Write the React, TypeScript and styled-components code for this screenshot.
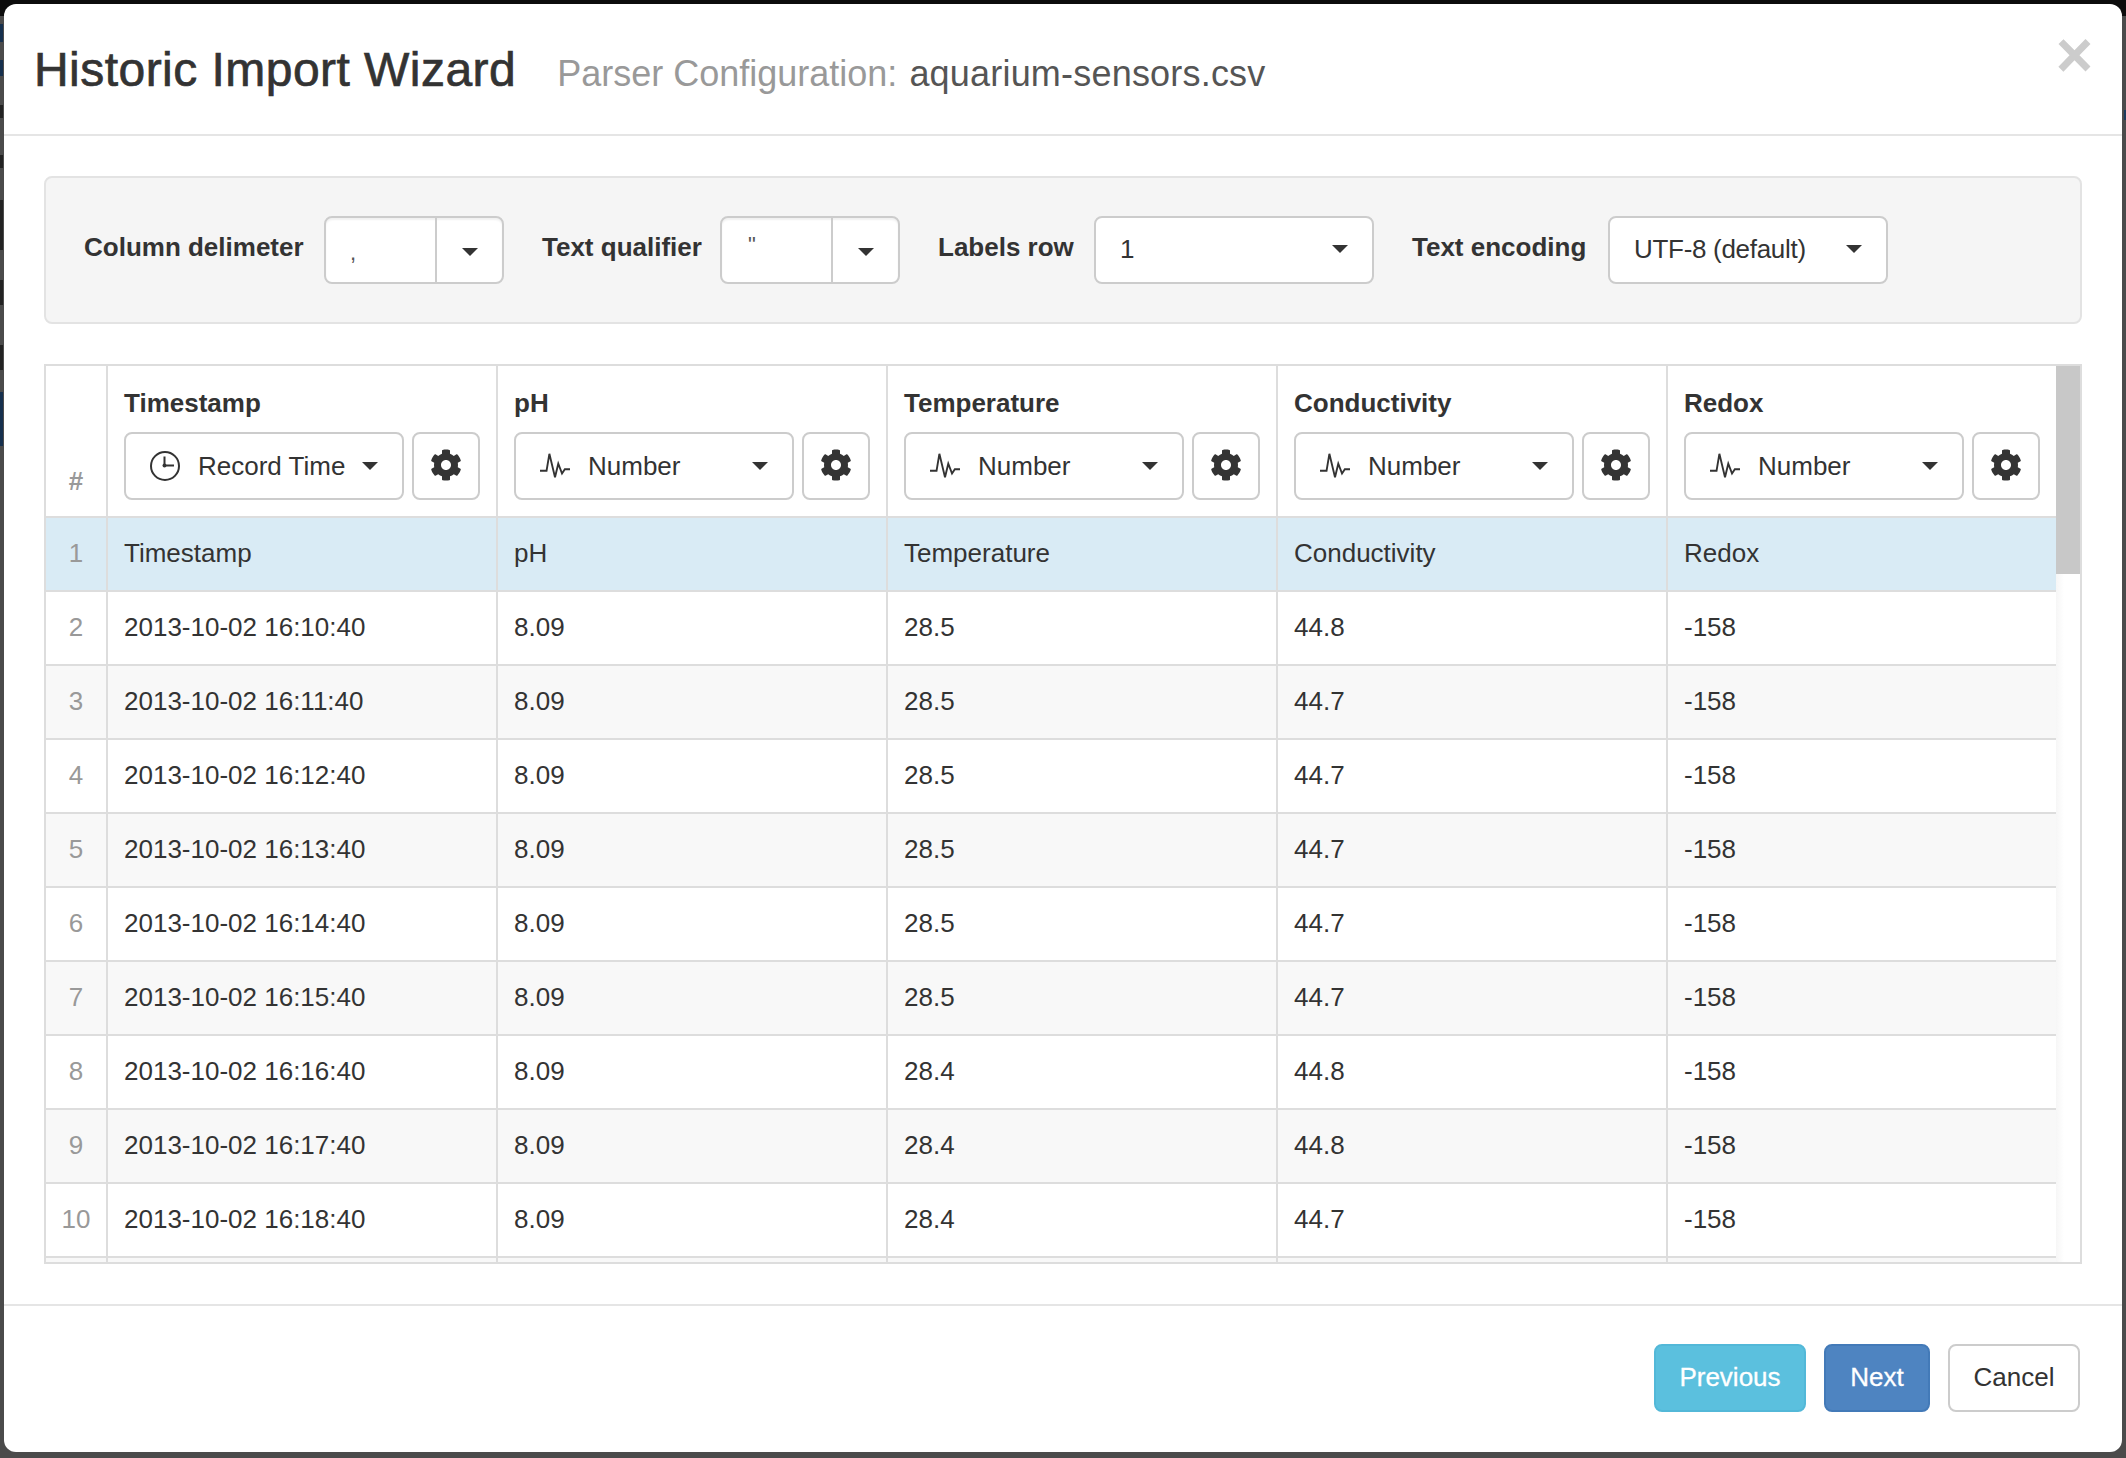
import styled, { createGlobalStyle } from 'styled-components';
import { FaCog } from 'react-icons/fa';

type Column = {
    name: string;
    type: 'time' | 'number';
};

const columns: Column[] = [
    { name: 'Timestamp', type: 'time' },
    { name: 'pH', type: 'number' },
    { name: 'Temperature', type: 'number' },
    { name: 'Conductivity', type: 'number' },
    { name: 'Redox', type: 'number' },
];

const rows: string[][] = [
    ['Timestamp', 'pH', 'Temperature', 'Conductivity', 'Redox'],
    ['2013-10-02 16:10:40', '8.09', '28.5', '44.8', '-158'],
    ['2013-10-02 16:11:40', '8.09', '28.5', '44.7', '-158'],
    ['2013-10-02 16:12:40', '8.09', '28.5', '44.7', '-158'],
    ['2013-10-02 16:13:40', '8.09', '28.5', '44.7', '-158'],
    ['2013-10-02 16:14:40', '8.09', '28.5', '44.7', '-158'],
    ['2013-10-02 16:15:40', '8.09', '28.5', '44.7', '-158'],
    ['2013-10-02 16:16:40', '8.09', '28.4', '44.8', '-158'],
    ['2013-10-02 16:17:40', '8.09', '28.4', '44.8', '-158'],
    ['2013-10-02 16:18:40', '8.09', '28.4', '44.7', '-158'],
];

const ClockIcon = () => (
    <TypeIcon viewBox="0 0 30 30" fill="none" stroke="#333" strokeWidth="2">
        <circle cx="15" cy="15" r="14" />
        <path d="M14.5 5.5V14.5H24" />
        <circle cx="14.5" cy="14.5" r="2" fill="#333" stroke="none" />
    </TypeIcon>
);

const PulseIcon = () => (
    <TypeIcon viewBox="0 0 32 30" fill="none" stroke="#333" strokeWidth="2">
        <path d="M0 20H7L10 2L16 27L19.5 12.5L23.5 23L26.5 18.5H32" />
    </TypeIcon>
);

const App = () => {
    return (
        <Page>
            <GlobalStyle />
            <Modal>
                <ModalHeader>
                    <Title>Historic Import Wizard</Title>
                    <Subtitle>Parser Configuration: <FileName>aquarium-sensors.csv</FileName></Subtitle>
                    <CloseButton>×</CloseButton>
                </ModalHeader>
                <ModalBody>
                    <Well>
                        <FormGroup>
                            <FormLabel $width={219}>Column delimeter</FormLabel>
                            <Combo>
                                <ComboValue>,</ComboValue>
                                <ComboToggle><Caret /></ComboToggle>
                            </Combo>
                        </FormGroup>
                        <FormGroup>
                            <FormLabel $width={157}>Text qualifier</FormLabel>
                            <Combo>
                                <ComboValue $raised>"</ComboValue>
                                <ComboToggle><Caret /></ComboToggle>
                            </Combo>
                        </FormGroup>
                        <FormGroup>
                            <FormLabel $width={135}>Labels row</FormLabel>
                            <SelectButton>1<Caret /></SelectButton>
                        </FormGroup>
                        <FormGroup>
                            <FormLabel $width={175}>Text encoding</FormLabel>
                            <SelectButton>UTF-8 (default)<Caret /></SelectButton>
                        </FormGroup>
                    </Well>
                    <TableFrame>
                        <TableViewport>
                            <DataTable>
                                <colgroup>
                                    <col width={62} />
                                    <col width={390} />
                                    <col width={390} />
                                    <col width={390} />
                                    <col width={390} />
                                    <col width={388} />
                                </colgroup>
                                <thead>
                                    <tr>
                                        <HashHead>#</HashHead>
                                        {columns.map((column) => (
                                            <ColumnHead key={column.name}>
                                                <ColumnName>{column.name}</ColumnName>
                                                <ColumnControls>
                                                    <TypeButton>
                                                        {column.type === 'time' ? <ClockIcon /> : <PulseIcon />}
                                                        <TypeLabel>{column.type === 'time' ? 'Record Time' : 'Number'}</TypeLabel>
                                                        <Caret />
                                                    </TypeButton>
                                                    <GearButton><FaCog size={32} color="#333" /></GearButton>
                                                </ColumnControls>
                                            </ColumnHead>
                                        ))}
                                    </tr>
                                </thead>
                                <tbody>
                                    {rows.map((row, index) => (
                                        <DataRow key={index} $labels={index === 0} $striped={index > 0 && index % 2 === 0}>
                                            <RowNumber>{index + 1}</RowNumber>
                                            {row.map((value, cellIndex) => (
                                                <DataCell key={cellIndex}>{value}</DataCell>
                                            ))}
                                        </DataRow>
                                    ))}
                                    {/* next row is scrolled out of view, only its top edge shows */}
                                    <DataRow $labels={false} $striped>
                                        <RowNumber />
                                        {columns.map((column) => (
                                            <DataCell key={column.name} />
                                        ))}
                                    </DataRow>
                                </tbody>
                            </DataTable>
                        </TableViewport>
                        <ScrollTrack>
                            <ScrollThumb />
                        </ScrollTrack>
                    </TableFrame>
                </ModalBody>
                <ModalFooter>
                    <FooterButton $variant="info">Previous</FooterButton>
                    <FooterButton $variant="primary">Next</FooterButton>
                    <FooterButton $variant="default">Cancel</FooterButton>
                </ModalFooter>
            </Modal>
        </Page>
    );
};

const GlobalStyle = createGlobalStyle`
    html, body {
        margin: 0;
        padding: 0;
    }

    body {
        font-family: "Liberation Sans", Arial, sans-serif;
        font-size: 26px;
        color: #333;
    }
`;

const Page = styled.div`
    width: 2126px;
    height: 1458px;
    box-sizing: border-box;
    padding: 4px;
    overflow: hidden;
    background:
        linear-gradient(#0c0c0c, #0c0c0c) top / 100% 16px no-repeat,
        linear-gradient(
            to bottom,
            transparent 24px, #16304e 24px 42px,
            transparent 42px 60px, #16304e 60px 76px,
            transparent 76px 105px, #222 105px 118px,
            transparent 118px 155px, #222 155px 168px,
            transparent 168px 200px, #222 200px 250px,
            transparent 250px 280px, #222 280px 305px,
            transparent 305px 345px, #222 345px 370px,
            transparent 370px 392px, #16304e 392px 446px,
            transparent 446px
        ) left / 3px 100% no-repeat,
        linear-gradient(to bottom, transparent 110px, #1c3a5c 110px 120px, transparent 120px) right / 2px 100% no-repeat,
        #4b4b4b;
`;

const Modal = styled.div`
    width: 2118px;
    height: 1448px;
    display: flex;
    flex-direction: column;
    background: #fff;
    border-radius: 12px;
`;

const ModalHeader = styled.div`
    height: 111px;
    flex: none;
    display: flex;
    align-items: baseline;
    padding: 19px 29px 0 30px;
    border-bottom: 2px solid #e5e5e5;
`;

const Title = styled.h3`
    margin: 0;
    font-size: 48px;
    line-height: 94px;
    font-weight: 400;
    letter-spacing: 0.46px;
    -webkit-text-stroke: 0.7px #333;
    color: #333;
`;

const Subtitle = styled.span`
    margin-left: 41px;
    font-size: 36px;
    color: #999;
`;

const FileName = styled.span`
    margin-left: 2px;
    letter-spacing: 0.2px;
    color: #555;
`;

const CloseButton = styled.span`
    margin-left: auto;
    align-self: flex-start;
    font-size: 64px;
    line-height: 1;
    font-weight: 700;
    color: #ccc;
`;

const ModalBody = styled.div`
    flex: 1;
    display: flex;
    flex-direction: column;
    gap: 40px;
    padding: 40px;
`;

const Well = styled.div`
    height: 148px;
    box-sizing: border-box;
    display: flex;
    align-items: center;
    gap: 38px;
    padding: 0 38px;
    background: #f5f5f5;
    border: 2px solid #e3e3e3;
    border-radius: 8px;
`;

const FormGroup = styled.div`
    display: flex;
    align-items: center;
    gap: 21px;
`;

const FormLabel = styled.label<{ $width: number }>`
    width: ${({ $width }) => $width}px;
    font-weight: 700;
    white-space: nowrap;
    margin-top: -6px;
`;

const Combo = styled.div`
    width: 180px;
    height: 68px;
    box-sizing: border-box;
    display: flex;
    background: #fff;
    border: 2px solid #ccc;
    border-radius: 8px;
    box-shadow: inset 0 2px 2px rgba(0, 0, 0, 0.06);
`;

const ComboValue = styled.div<{ $raised?: boolean }>`
    width: 111px;
    flex: none;
    box-sizing: border-box;
    padding: ${({ $raised }) => ($raised ? '12px 0 0 26px' : '20px 0 0 24px')};
    font-size: 22px;
    line-height: 30px;
    color: #555;
    border-right: 2px solid #ccc;
`;

const ComboToggle = styled.div`
    flex: 1;
    display: flex;
    align-items: center;
    justify-content: center;
    padding-top: 4px;
`;

const Caret = styled.span`
    display: inline-block;
    flex: none;
    width: 0;
    height: 0;
    border-top: 8px solid #333;
    border-left: 8px solid transparent;
    border-right: 8px solid transparent;
`;

const SelectButton = styled.div`
    width: 280px;
    height: 68px;
    box-sizing: border-box;
    display: flex;
    align-items: center;
    justify-content: space-between;
    padding: 0 24px 2px;
    background: #fff;
    border: 2px solid #ccc;
    border-radius: 8px;
    letter-spacing: -0.3px;
`;

const TableFrame = styled.div`
    height: 900px;
    box-sizing: border-box;
    flex: none;
    display: flex;
    border: 2px solid #ddd;
    overflow: hidden;
`;

const TableViewport = styled.div`
    width: 2010px;
    flex: none;
    overflow: hidden;
`;

const DataTable = styled.table`
    width: 2010px;
    table-layout: fixed;
    border-collapse: separate;
    border-spacing: 0;
`;

const HashHead = styled.th`
    box-sizing: border-box;
    height: 152px;
    padding: 0 0 15px;
    vertical-align: bottom;
    text-align: center;
    line-height: 40px;
    font-weight: 700;
    font-size: 26px;
    color: #999;
    border-right: 2px solid #ddd;
    border-bottom: 2px solid #ddd;
`;

const ColumnHead = styled.th`
    box-sizing: border-box;
    padding: 17px 16px 16px;
    vertical-align: bottom;
    text-align: left;
    border-right: 2px solid #ddd;
    border-bottom: 2px solid #ddd;

    &:last-child {
        border-right: none;
    }
`;

const ColumnName = styled.div`
    font-weight: 700;
    line-height: 40px;
    margin-bottom: 9px;
`;

const ColumnControls = styled.div`
    display: flex;
    gap: 8px;
`;

const TypeButton = styled.div`
    width: 280px;
    height: 68px;
    box-sizing: border-box;
    display: flex;
    align-items: center;
    padding: 0 24px;
    background: #fff;
    border: 2px solid #ccc;
    border-radius: 8px;
    font-weight: 400;
`;

const TypeIcon = styled.svg`
    width: 30px;
    height: 30px;
    flex: none;
    overflow: visible;
`;

const TypeLabel = styled.span`
    flex: 1;
    margin-left: 18px;
    white-space: nowrap;
`;

const GearButton = styled.div`
    width: 68px;
    height: 68px;
    box-sizing: border-box;
    display: flex;
    align-items: center;
    justify-content: center;
    padding-bottom: 2px;
    background: #fff;
    border: 2px solid #ccc;
    border-radius: 8px;
`;

const DataRow = styled.tr<{ $labels: boolean; $striped: boolean }>`
    background: ${({ $labels, $striped }) => ($labels ? '#d9ebf5' : $striped ? '#f8f8f8' : '#fff')};
`;

const RowNumber = styled.td`
    box-sizing: border-box;
    height: 74px;
    padding: 0 0 2px;
    text-align: center;
    color: #999;
    border-right: 2px solid #ddd;
    border-bottom: 2px solid #ddd;
`;

const DataCell = styled.td`
    box-sizing: border-box;
    height: 74px;
    padding: 0 16px 2px;
    color: #333;
    border-right: 2px solid #ddd;
    border-bottom: 2px solid #ddd;

    &:last-child {
        border-right: none;
    }
`;

const ScrollTrack = styled.div`
    flex: 1;
    background: linear-gradient(to right, #f6f6f6, #fff 8px);
`;

const ScrollThumb = styled.div`
    height: 208px;
    background: #c8c8c8;
`;

const ModalFooter = styled.div`
    height: 148px;
    box-sizing: border-box;
    flex: none;
    display: flex;
    justify-content: flex-end;
    gap: 18px;
    padding: 38px 42px 40px 0;
    border-top: 2px solid #e5e5e5;
`;

const variants = {
    info: { background: '#5bc0de', border: '#53b8d8', color: '#fff', stroke: '0.3px', minWidth: '0' },
    primary: { background: '#4e84c1', border: '#437ab8', color: '#fff', stroke: '0.3px', minWidth: '106px' },
    default: { background: '#fff', border: '#ccc', color: '#333', stroke: '0', minWidth: '0' },
};

const FooterButton = styled.div<{ $variant: keyof typeof variants }>`
    height: 68px;
    min-width: ${({ $variant }) => variants[$variant].minWidth};
    box-sizing: border-box;
    display: flex;
    align-items: center;
    justify-content: center;
    padding: 0 23.5px 2px;
    border-radius: 8px;
    border: 2px solid ${({ $variant }) => variants[$variant].border};
    background: ${({ $variant }) => variants[$variant].background};
    color: ${({ $variant }) => variants[$variant].color};
    -webkit-text-stroke: ${({ $variant }) => variants[$variant].stroke};
`;

export default App;
